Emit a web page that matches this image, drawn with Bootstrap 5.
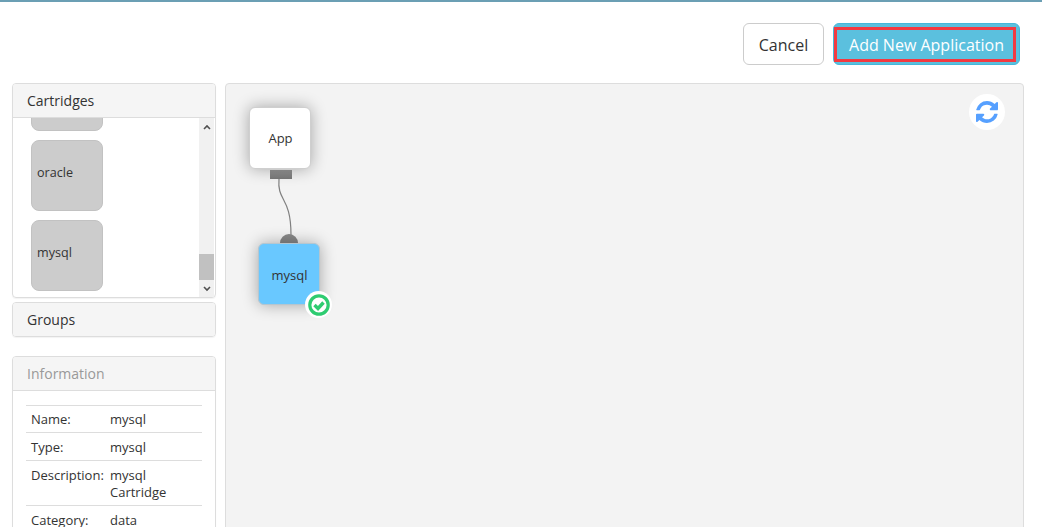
<!DOCTYPE html>
<html lang="en">
<head>
  <meta charset="UTF-8">
  <title>Application Editor</title>
  <link href="https://cdn.jsdelivr.net/npm/bootstrap@5.3.3/dist/css/bootstrap.min.css" rel="stylesheet">
  <style>
    html, body { height: 527px; overflow: hidden; }
    body { font-family: "Open Sans", "Liberation Sans", sans-serif; font-size: 13px; color: #333; background: #fff; }
    .top-line { height: 2px; background: #6b9fb4; }
    .action-bar { padding: 21px 22px 18px 0; gap: 9px; }
    .btn-cancel, .btn-add { height: 42px; font-size: 16px; border-radius: 6px; padding: 1px 0 0; }
    .btn-cancel { width: 81px; color: #333; background: #fff; border: 1px solid #ccc; }
    .btn-add { width: 187px; color: #fff; background: #5bc0de; border: 1px solid #46b8da; position: relative; }
    .btn-add::after { content: ""; position: absolute; left: 0; right: 3px; top: 3px; bottom: 2px; border: 3px solid #f33a41; }
    .main-area { padding: 0 18px 0 12px; gap: 9px; }
    .side-col { width: 204px; flex: none; }
    .side-panel { border: 1px solid #ddd; border-radius: 4px; overflow: hidden; box-shadow: 0 1px 1px rgba(0,0,0,.05); }
    .side-head { height: 34px; padding: 0 14px; display: flex; align-items: center; background: #f5f5f5; font-size: 14px; color: #333; }
    .side-head.with-line { border-bottom: 1px solid #ddd; }
    .side-head.short-head { height: 33px; }
    .side-head.muted-head { color: #999; }
    .cart-wrap { height: 179px; }
    .cart-list { flex: 1; overflow: hidden; padding: 0 0 6px 18px; gap: 9px; justify-content: flex-end; }
    .cart-item { width: 72px; height: 71px; flex: none; background: #ccc; border: 1px solid #c2c2c2; border-radius: 8px; padding-left: 5px; padding-bottom: 5px; display: flex; align-items: center; color: #333; font-size: 12.6px; }
    .fake-scroll { width: 15px; flex: none; margin-right: 1px; background: #f1f1f1; }
    .fake-scroll svg { display: block; margin: 0 auto; }
    .scroll-btn { height: 17px; display: flex; align-items: center; justify-content: center; }
    .scroll-track { flex: 1; display: flex; flex-direction: column; justify-content: flex-end; }
    .scroll-thumb { height: 26px; background: #c1c1c1; }
    .info-panel { margin-top: 19px; }
    .info-body { padding: 14px 13px 0; }
    .info-table { margin: 0; color: #333; font-size: 13px; line-height: 17px; --bs-table-bg: transparent; }
    .info-table tr { border-top: 1px solid #ddd; }
    .info-table td { padding: 6px 5px 4px; border: 0; vertical-align: top; }
    .info-table tr:first-child td { padding-top: 5px; }
    .info-table td:first-child { width: 79px; padding-right: 0; }
    .canvas-box { flex: 1; height: 470px; position: relative; background: #f3f3f3; border: 1px solid #ddd; border-radius: 4px; }
    .node { position: absolute; width: 62px; height: 62px; padding: 2px 0 0 1px; border-radius: 6px; display: flex; align-items: center; justify-content: center; box-shadow: 0 0 16px rgba(0,0,0,.32); color: #333; z-index: 2; }
    .node-app { left: 23px; top: 23px; background: #fff; border: 1px solid #cfcfcf; }
    .node-db { left: 32px; top: 159px; padding-top: 3px; background: #69c8ff; border: 1px solid #b5c6d0; }
    .port-out { position: absolute; left: 44px; top: 86px; width: 22px; height: 9px; background: linear-gradient(#999, #777); z-index: 1; }
    .port-in { position: absolute; left: 54px; top: 150px; width: 18px; height: 10px; background: #888; border-radius: 9px 9px 0 0; z-index: 1; }
    .wire { position: absolute; left: 40px; top: 90px; z-index: 0; }
    .status-badge { position: absolute; left: 79px; top: 207px; width: 27px; height: 27px; border-radius: 50%; background: #fff; z-index: 3; display: flex; align-items: center; justify-content: center; }
    .refresh-btn { position: absolute; right: 18px; top: 10px; width: 36px; height: 36px; border-radius: 50%; background: #fff; display: flex; align-items: center; justify-content: center; }
  </style>
</head>
<body>
  <div class="top-line"></div>

  <div class="action-bar d-flex justify-content-end">
    <button class="btn btn-cancel">Cancel</button>
    <button class="btn btn-add">Add New Application</button>
  </div>

  <div class="main-area d-flex align-items-start">
    <div class="side-col">
      <div class="side-panel">
        <div class="side-head with-line">Cartridges</div>
        <div class="cart-wrap d-flex">
          <div class="cart-list d-flex flex-column">
            <div class="cart-item"></div>
            <div class="cart-item">oracle</div>
            <div class="cart-item">mysql</div>
          </div>
          <div class="fake-scroll d-flex flex-column">
            <div class="scroll-btn"><svg width="8" height="6" viewBox="0 0 8 6"><path d="M1 5 L4 2 L7 5" fill="none" stroke="#505050" stroke-width="1.6"/></svg></div>
            <div class="scroll-track"><div class="scroll-thumb"></div></div>
            <div class="scroll-btn"><svg width="8" height="6" viewBox="0 0 8 6"><path d="M1 1 L4 4 L7 1" fill="none" stroke="#505050" stroke-width="1.6"/></svg></div>
          </div>
        </div>
      </div>

      <div class="side-panel mt-1">
        <div class="side-head short-head">Groups</div>
      </div>

      <div class="side-panel info-panel">
        <div class="side-head with-line muted-head">Information</div>
        <div class="info-body">
          <table class="table info-table">
            <tbody>
              <tr><td>Name:</td><td>mysql</td></tr>
              <tr><td>Type:</td><td>mysql</td></tr>
              <tr><td>Description:</td><td>mysql<br>Cartridge</td></tr>
              <tr><td>Category:</td><td>data</td></tr>
            </tbody>
          </table>
        </div>
      </div>
    </div>

    <div class="canvas-box">
      <div class="refresh-btn">
        <svg width="22" height="22" viewBox="0 0 1536 1536"><path fill="#56a0ff" d="M1511 928q0 5-1 7-64 268-268 434.5T764 1536q-146 0-282.5-55T238 1324l-129 129q-19 19-45 19t-45-19-19-45V960q0-26 19-45t45-19h448q26 0 45 19t19 45-19 45L420 1142q71 66 161 102t187 36q134 0 250-65t186-179q11-17 53-117 8-23 30-23h192q13 0 22.500 9.500t9.500 22.500zm25-800v448q0 26-19 45t-45 19h-448q-26 0-45-19t-19-45 19-45l138-138Q969 256 768 256q-134 0-250 65T332 500q-11 17-53 117-8 23-30 23H50q-13 0-22.500-9.500T18 608v-7q65-268 270-434.500T768 0q146 0 284 55.500T1297 212l130-129q19-19 45-19t45 19 19 45z"/></svg>
      </div>
      <div class="node node-app">App</div>
      <div class="port-out"></div>
      <svg class="wire" width="40" height="70" viewBox="0 0 40 70"><path d="M13 5 C11 28 25 22 25 61" fill="none" stroke="#808080" stroke-width="1.2"/></svg>
      <div class="port-in"></div>
      <div class="node node-db">mysql</div>
      <div class="status-badge">
        <svg width="22" height="22" viewBox="0 0 22 22"><circle cx="11" cy="11" r="9.200" fill="none" stroke="#2ecc71" stroke-width="3.200"/><path d="M6.500 11 L10 14.500 L15.500 8.500" fill="none" stroke="#2ecc71" stroke-width="3.400"/></svg>
      </div>
    </div>
  </div>
  <script src="https://cdn.jsdelivr.net/npm/bootstrap@5.3.3/dist/js/bootstrap.bundle.min.js"></script>
</body>
</html>
